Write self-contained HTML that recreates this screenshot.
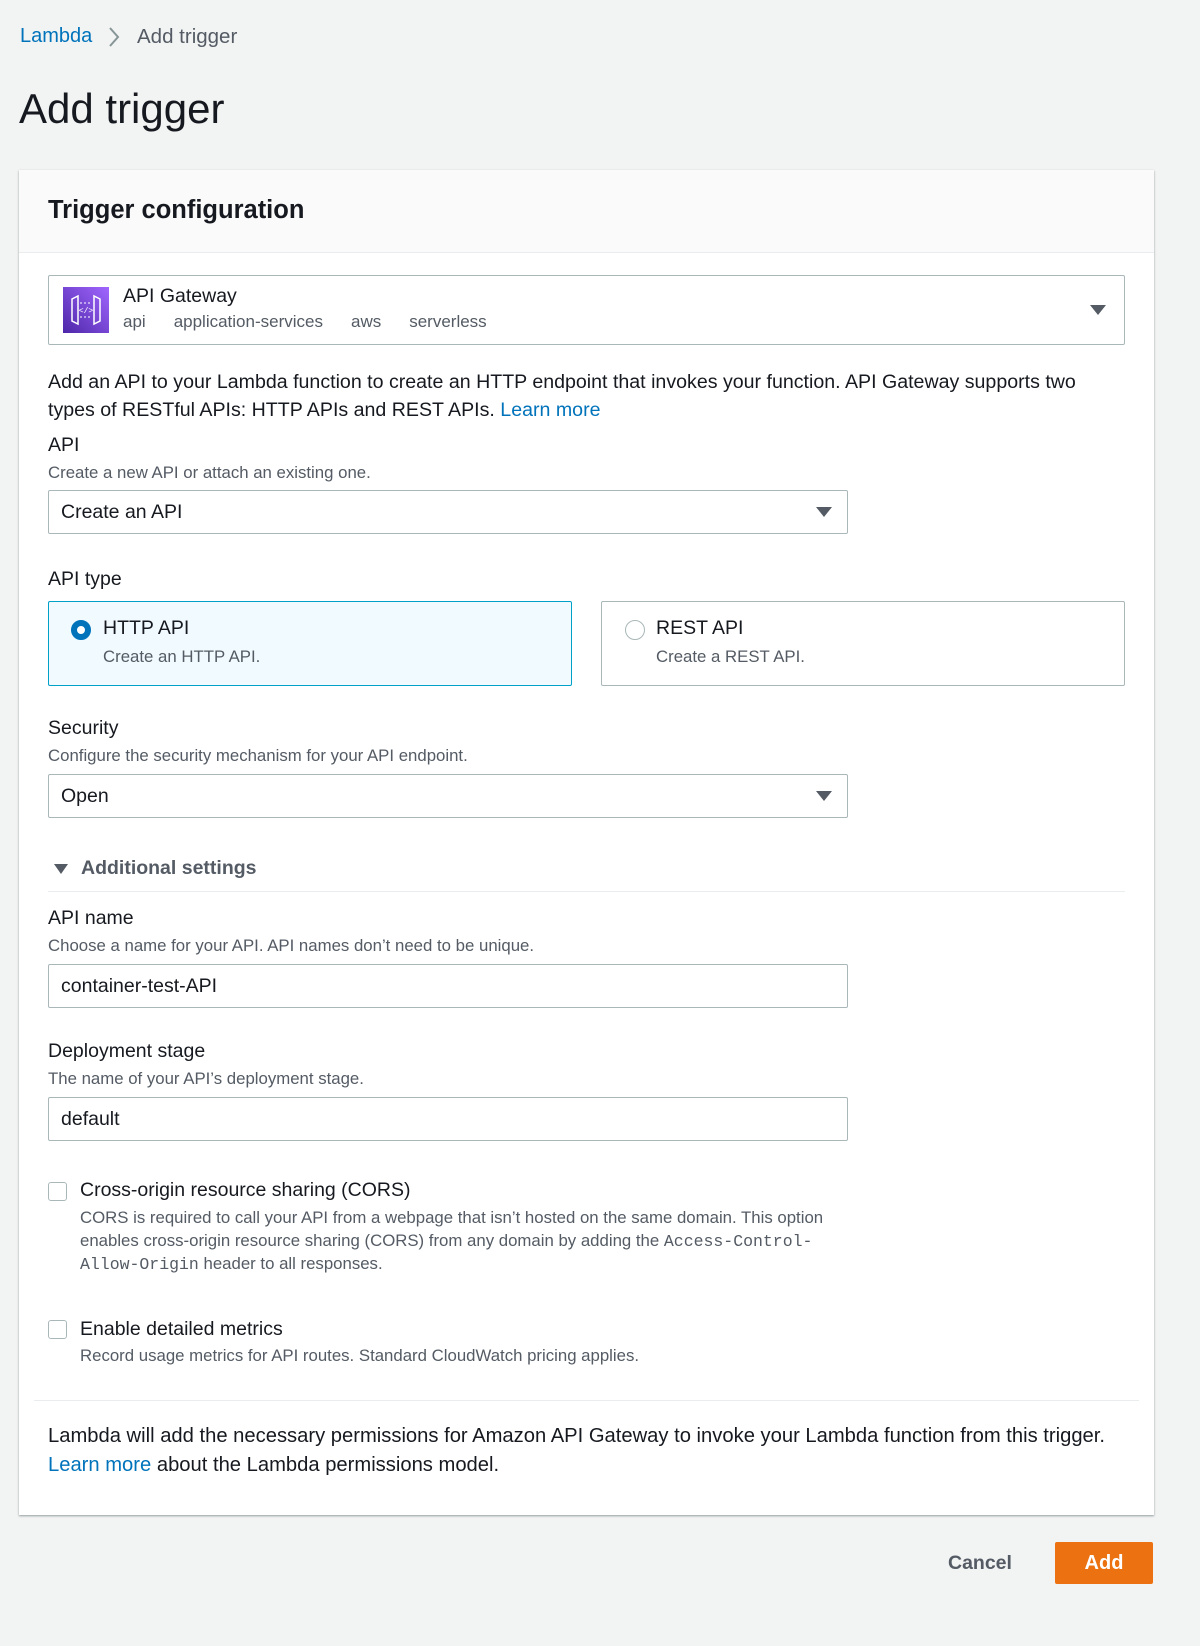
<!DOCTYPE html>
<html><head><meta charset="utf-8"><style>
*{box-sizing:border-box;margin:0;padding:0}
body{width:1200px;height:1646px;background:#f2f3f3;font-family:"Liberation Sans",sans-serif;color:#16191f;position:relative;overflow:hidden}
.a{position:absolute;white-space:nowrap}
.lbl{font-size:19.5px;color:#16191f}
.sub{font-size:16.8px;color:#545b64}
.link{color:#0073bb}
.box{position:absolute;border:1px solid #aab7b8;border-radius:2px;background:#fff}
.caret{position:absolute;width:0;height:0;border-left:8px solid transparent;border-right:8px solid transparent;border-top:10px solid #545b64}
.cb{position:absolute;width:19px;height:19px;border:1.5px solid #aab7b8;border-radius:3px;background:#fff}
</style></head><body>
<div class="a" style="left:20px;top:25px;font-size:20px"><span class="link">Lambda</span></div>
<svg class="a" style="left:107px;top:26px" width="14" height="22"><path d="M3 2 L11 11 L3 20" stroke="#879596" stroke-width="2" fill="none"/></svg>
<div class="a" style="left:137px;top:25px;font-size:20.5px;color:#545b64">Add trigger</div>
<div class="a" style="left:19px;top:85px;font-size:42px;color:#16191f">Add trigger</div>

<div style="position:absolute;left:19px;top:170px;width:1135px;height:1345px;background:#fff;box-shadow:0 1px 2px rgba(0,28,36,.4)">
 <div style="height:83px;background:#fafafa;border-bottom:1px solid #eaeded"></div>
</div>
<div class="a" style="left:48px;top:196px;font-size:25.5px;font-weight:bold">Trigger configuration</div>

<div class="box" style="left:48px;top:275px;width:1077px;height:70px"></div>
<svg class="a" style="left:63px;top:287px" width="46" height="46" viewBox="0 0 46 46"><defs><linearGradient id="g" x1="0" y1="1" x2="1" y2="0"><stop offset="0" stop-color="#4d27a8"/><stop offset="1" stop-color="#a166ff"/></linearGradient></defs><rect width="46" height="46" fill="url(#g)"/><path d="M9 12 L15 9 L15 37 L9 34 Z M37 12 L31 9 L31 37 L37 34 Z" fill="none" stroke="#fff" stroke-width="1.5"/><path d="M17 16 H29 M17 30 H29" stroke="#fff" stroke-dasharray="2 2"/><text x="23" y="26" font-size="8" fill="#fff" text-anchor="middle" font-family="Liberation Mono">&lt;/&gt;</text></svg>
<div class="a" style="left:123px;top:285px;font-size:19.5px">API Gateway</div>
<div class="a sub" style="left:123px;top:312px;font-size:17px">api<span style="margin-left:28px">application-services</span><span style="margin-left:28px">aws</span><span style="margin-left:28px">serverless</span></div>
<div class="caret" style="left:1090px;top:305px"></div>

<div class="a" style="left:48px;top:368px;font-size:19.6px;line-height:28px;white-space:normal;width:1068px">Add an API to your Lambda function to create an HTTP endpoint that invokes your function. API Gateway supports two types of RESTful APIs: HTTP APIs and REST APIs. <span class="link">Learn more</span></div>

<div class="a lbl" style="left:48px;top:434px">API</div>
<div class="a sub" style="left:48px;top:463px">Create a new API or attach an existing one.</div>
<div class="box" style="left:48px;top:490px;width:800px;height:44px"></div>
<div class="a" style="left:61px;top:501px;font-size:19.5px">Create an API</div>
<div class="caret" style="left:816px;top:507px"></div>

<div class="a lbl" style="left:48px;top:568px">API type</div>
<div style="position:absolute;left:48px;top:601px;width:524px;height:85px;border:1px solid #00a1c9;background:#f1faff;border-radius:2px"></div>
<div style="position:absolute;left:71px;top:620px;width:20px;height:20px;border-radius:50%;border:6px solid #0073bb;background:#fff"></div>
<div class="a" style="left:103px;top:617px;font-size:19.5px">HTTP API</div>
<div class="a sub" style="left:103px;top:647px">Create an HTTP API.</div>
<div class="box" style="left:601px;top:601px;width:524px;height:85px"></div>
<div style="position:absolute;left:625px;top:620px;width:20px;height:20px;border-radius:50%;border:1.5px solid #aab7b8;background:#fff"></div>
<div class="a" style="left:656px;top:617px;font-size:19.5px">REST API</div>
<div class="a sub" style="left:656px;top:647px">Create a REST API.</div>

<div class="a lbl" style="left:48px;top:717px">Security</div>
<div class="a sub" style="left:48px;top:746px">Configure the security mechanism for your API endpoint.</div>
<div class="box" style="left:48px;top:774px;width:800px;height:44px"></div>
<div class="a" style="left:61px;top:785px;font-size:19.5px">Open</div>
<div class="caret" style="left:816px;top:791px"></div>

<div class="caret" style="left:54px;top:864px;border-left-width:7px;border-right-width:7px;border-top-width:10px"></div>
<div class="a" style="left:81px;top:857px;font-size:19.5px;font-weight:bold;color:#545b64">Additional settings</div>
<div style="position:absolute;left:48px;top:891px;width:1077px;height:1px;background:#eaeded"></div>

<div class="a lbl" style="left:48px;top:907px">API name</div>
<div class="a sub" style="left:48px;top:936px">Choose a name for your API. API names don’t need to be unique.</div>
<div class="box" style="left:48px;top:964px;width:800px;height:44px"></div>
<div class="a" style="left:61px;top:975px;font-size:19.5px">container-test-API</div>

<div class="a lbl" style="left:48px;top:1040px">Deployment stage</div>
<div class="a sub" style="left:48px;top:1069px">The name of your API’s deployment stage.</div>
<div class="box" style="left:48px;top:1097px;width:800px;height:44px"></div>
<div class="a" style="left:61px;top:1108px;font-size:19.5px">default</div>

<div class="cb" style="left:48px;top:1182px"></div>
<div class="a lbl" style="left:80px;top:1179px">Cross-origin resource sharing (CORS)</div>
<div class="a sub" style="left:80px;top:1207px;line-height:22.5px;white-space:normal;width:780px">CORS is required to call your API from a webpage that isn’t hosted on the same domain. This option enables cross-origin resource sharing (CORS) from any domain by adding the <span style="font-family:'Liberation Mono',monospace;font-size:16.5px">Access-Control-Allow-Origin</span> header to all responses.</div>

<div class="cb" style="left:48px;top:1320px"></div>
<div class="a lbl" style="left:80px;top:1318px">Enable detailed metrics</div>
<div class="a sub" style="left:80px;top:1346px">Record usage metrics for API routes. Standard CloudWatch pricing applies.</div>

<div style="position:absolute;left:34px;top:1400px;width:1105px;height:1px;background:#eaeded"></div>
<div class="a" style="left:48px;top:1422px;font-size:20.2px;line-height:29px;white-space:normal;width:1100px">Lambda will add the necessary permissions for Amazon API Gateway to invoke your Lambda function from this trigger.<br><span class="link">Learn more</span> about the Lambda permissions model.</div>

<div class="a" style="left:948px;top:1552px;font-size:19.5px;font-weight:bold;color:#545b64">Cancel</div>
<div style="position:absolute;left:1055px;top:1542px;width:98px;height:42px;background:#ec7211;border-radius:2px;color:#fff;font-weight:bold;font-size:20px;text-align:center;line-height:42px">Add</div>
</body></html>
